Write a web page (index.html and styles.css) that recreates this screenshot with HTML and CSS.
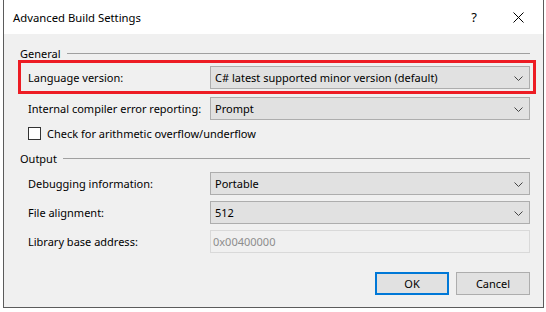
FILE: index.html
```html
<!DOCTYPE html>
<html lang="en">
<head>
    <meta charset="UTF-8">
    <title>Advanced Build Settings</title>
    <link rel="stylesheet" href="styles.css">
</head>
<body>
    <div class="dialog">
        <div class="titlebar">
            <span class="title">Advanced Build Settings</span>
            <span class="help">?</span>
            <svg class="close" width="11" height="11" viewBox="0 0 11 11">
                <path d="M0.5 0.5 L10.5 10.5 M10.5 0.5 L0.5 10.5" stroke="#000" stroke-width="1" fill="none"/>
            </svg>
        </div>

        <div class="content">
            <div class="group-head"><span>General</span><span class="rule"></span></div>

            <div class="row marked">
                <label>Language version:</label>
                <div class="combo">C# latest supported minor version (default)
                    <svg class="chev" width="9" height="5" viewBox="0 0 9 5"><path d="M0.5 0.5 L4.5 4.5 L8.5 0.5" stroke="#444" fill="none"/></svg>
                </div>
            </div>

            <div class="row second">
                <label>Internal compiler error reporting:</label>
                <div class="combo">Prompt
                    <svg class="chev" width="9" height="5" viewBox="0 0 9 5"><path d="M0.5 0.5 L4.5 4.5 L8.5 0.5" stroke="#444" fill="none"/></svg>
                </div>
            </div>

            <div class="check-row">
                <span class="checkbox"></span>
                <span>Check for arithmetic overflow/underflow</span>
            </div>

            <div class="group-head output"><span>Output</span><span class="rule"></span></div>

            <div class="row">
                <label>Debugging information:</label>
                <div class="combo">Portable
                    <svg class="chev" width="9" height="5" viewBox="0 0 9 5"><path d="M0.5 0.5 L4.5 4.5 L8.5 0.5" stroke="#444" fill="none"/></svg>
                </div>
            </div>

            <div class="row tight">
                <label>File alignment:</label>
                <div class="combo">512
                    <svg class="chev" width="9" height="5" viewBox="0 0 9 5"><path d="M0.5 0.5 L4.5 4.5 L8.5 0.5" stroke="#444" fill="none"/></svg>
                </div>
            </div>

            <div class="row tight">
                <label>Library base address:</label>
                <div class="textbox">0x00400000</div>
            </div>

            <div class="buttons">
                <button class="btn default">OK</button>
                <button class="btn">Cancel</button>
            </div>
        </div>
    </div>
</body>
</html>
```

FILE: styles.css
```css
body {
    margin: 0;
    background-color: #ffffff;
    font-family: "Noto Sans", "Open Sans", sans-serif;
    font-size: 11px;
    color: #000;
}
.dialog {
    margin-left: 3px;
    width: 539px;
    height: 307px;
    border: 1px solid #5b5b5b;
    border-top: none;
    background-color: #f0f0f0;
}
.titlebar {
    height: 34px;
    background-color: #ffffff;
    display: flex;
    align-items: center;
}
.title {
    margin-left: 9px;
    flex: 1;
    font-size: 11.3px;
}
.help {
    font-size: 13px;
    margin-right: 36px;
}
.close {
    margin-right: 19px;
}
.content {
    padding: 11px 13px 0 16px;
}
.group-head {
    display: flex;
    align-items: center;
    height: 16px;
    gap: 6px;
}
.group-head .rule {
    flex: 1;
    height: 1px;
    background-color: #a0a0a0;
}
.group-head.output {
    margin-top: 9px;
}
.row {
    display: grid;
    grid-template-columns: 182px 1fr;
    align-items: center;
    margin-left: 8px;
    height: 23px;
    margin-top: 6px;
    position: relative;
    white-space: nowrap;
}
.row.marked {
    margin-top: 5px;
}
.row.second {
    margin-top: 8px;
}
.row.tight {
    margin-top: 6px;
}
/* red highlight drawn over the first row */
.row.marked::after {
    content: "";
    position: absolute;
    left: -10px;
    right: -6px;
    top: -6px;
    bottom: -5px;
    border: 3px solid #ed1c24;
}
.combo {
    height: 23px;
    box-sizing: border-box;
    border: 1px solid #adadad;
    background-color: #e1e1e1;
    display: flex;
    align-items: center;
    padding-left: 4px;
    position: relative;
}
.chev {
    position: absolute;
    right: 6px;
    top: 9px;
}
.textbox {
    height: 23px;
    box-sizing: border-box;
    border: 1px solid #d9d9d9;
    display: flex;
    align-items: center;
    padding-left: 2px;
    color: #8d8d8d;
}
.check-row {
    display: flex;
    align-items: center;
    gap: 6px;
    height: 16px;
    margin: 5px 0 0 8px;
    white-space: nowrap;
}
.checkbox {
    width: 11px;
    height: 11px;
    border: 1px solid #333;
    background-color: #fff;
}
.buttons {
    display: flex;
    justify-content: flex-end;
    gap: 7px;
    margin-top: 19px;
}
.btn {
    width: 74px;
    height: 23px;
    font-family: inherit;
    font-size: 11px;
    background-color: #e1e1e1;
    border: 1px solid #adadad;
    padding: 0;
}
.btn.default {
    border: 2px solid #0078d7;
}
```
